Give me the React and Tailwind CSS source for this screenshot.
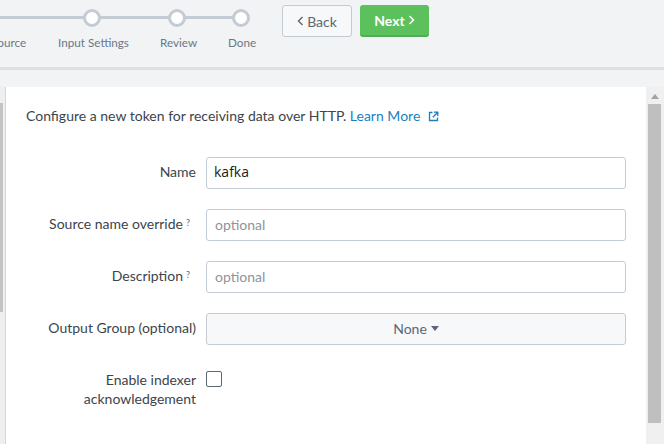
import React from "react";

const font = { fontFamily: "Lato, 'Open Sans', sans-serif" };

function Row({ label, q, children }) {
  return (
    <div className="flex items-center h-[32px]">
      <div className={`w-[190px] text-right text-[14px] text-[#3c444d] leading-[20px] -mt-[2px] ${q ? "pr-[6px]" : ""}`}>
        {label}
        {q && <sup className="text-[9px] text-[#5c6773] ml-[3px] relative -top-[3px]">?</sup>}
      </div>
      <div className="ml-[10px] w-[420px]">{children}</div>
    </div>
  );
}

export default function App() {
  return (
    <div className="w-[664px] h-[444px] overflow-hidden bg-[#f2f3f5] flex flex-col" style={font}>
      {/* top bar */}
      <div className="h-[67px] shrink-0 relative">
        <div className="absolute left-0 top-[16px] w-[242px] h-[3px] bg-[#c3cbd4]" />
        {[92, 177, 241].map((x) => (
          <div
            key={x}
            className="absolute top-[9px] w-[18px] h-[18px] rounded-full bg-white border-[3px] border-[#c3cbd4]"
            style={{ left: x - 9 }}
          />
        ))}
        <div className="absolute top-[34px] left-0 w-[270px] h-[16px] text-[11.7px] text-[#6b7785]">
          <span className="absolute left-[-9px]">Source</span>
          <span className="absolute left-[58px]">Input Settings</span>
          <span className="absolute left-[160px]">Review</span>
          <span className="absolute left-[228px]">Done</span>
        </div>
        <div className="absolute top-[5px] left-[282px] flex gap-[8px]">
          <button className="w-[70px] h-[32px] rounded-[3px] border border-[#c3cbd4] bg-[#f7f8fa] text-[#5c6773] text-[14px] flex items-center justify-center gap-[3px]">
            <svg width="7" height="10" viewBox="0 0 7 10"><path d="M5.5 1 L1.5 5 L5.5 9" fill="none" stroke="#5c6773" strokeWidth="1.4" /></svg>
            Back
          </button>
          <button className="w-[69px] h-[32px] rounded-[3px] bg-[#5cc05c] border-b-2 border-[#53ac53] text-white font-bold text-[14px] flex items-center justify-center gap-[3px]">
            Next
            <svg width="7" height="10" viewBox="0 0 7 10"><path d="M1.5 1 L5.5 5 L1.5 9" fill="none" stroke="#fff" strokeWidth="1.6" /></svg>
          </button>
        </div>
      </div>
      <div className="h-[3px] shrink-0 bg-[#dcdfe3]" />
      <div className="h-[17px] shrink-0" />
      {/* content */}
      <div className="flex flex-1 min-h-0">
        <div className="bg-[#efefef] relative border-r border-[#d6d6d6] shrink-0 w-[6px]">
          <div className="absolute left-0 top-[16px] w-[3px] h-[209px] bg-[#c4c4c4]" />
        </div>
        <div className="flex-1 bg-white pt-[20px] pl-[20px]">
          <div className="text-[14px] text-[#3c444d] leading-[18px] flex items-center">
            Configure a new token for receiving data over HTTP.&nbsp;
            <span className="text-[#1a80c0]">Learn More</span>
            <svg className="ml-[8px]" width="11" height="11" viewBox="0 0 11 11">
              <path d="M4.5 1.5 H1.5 V9.5 H9.5 V6.5" fill="none" stroke="#1a80c0" strokeWidth="1.3" />
              <path d="M6 1.2 H9.8 V5 M9.8 1.2 L4.8 6.2" fill="none" stroke="#1a80c0" strokeWidth="1.3" />
            </svg>
          </div>
          <div className="mt-[32px] ml-[-20px] flex flex-col gap-[20px]">
            <Row label="Name">
              <div className="h-[32px] border border-[#c3cbd4] rounded-[3px] px-[7px] flex items-center text-[14px] text-[#1a1c20] -mt-[1px]" style={{ fontFamily: "'Open Sans', sans-serif" }}>
                <span className="-mt-[3px]">kafka</span>
              </div>
            </Row>
            <Row label="Source name override" q>
              <div className="h-[32px] border border-[#c3cbd4] rounded-[3px] px-[8px] flex items-center text-[14px] text-[#8b95a0] -mt-[1px]">
                optional
              </div>
            </Row>
            <Row label="Description" q>
              <div className="h-[32px] border border-[#c3cbd4] rounded-[3px] px-[8px] flex items-center text-[14px] text-[#8b95a0] -mt-[1px]">
                optional
              </div>
            </Row>
            <Row label="Output Group (optional)">
              <div className="h-[32px] border border-[#c3cbd4] rounded-[3px] bg-[#f7f8fa] flex items-center justify-center text-[14px] text-[#5c6773] gap-[4px] -mt-[1px]">
                None
                <svg width="8" height="5" viewBox="0 0 8 5"><path d="M0 0 H8 L4 5 Z" fill="#5c6773" /></svg>
              </div>
            </Row>
            <div className="flex items-start mt-[5px]">
              <div className="w-[190px] text-right text-[14px] text-[#3c444d] leading-[19px]">
                Enable indexer<br />acknowledgement
              </div>
              <div className="ml-[10px] w-[16px] h-[16px] border border-[#5c6773] rounded-[2px] bg-white mt-[1px]" />
            </div>
          </div>
        </div>
        <div className="w-[18px] shrink-0 bg-[#f0f0f0] relative">
          <svg className="absolute left-[5px] top-[7px]" width="8" height="5" viewBox="0 0 8 5"><path d="M0 5 H8 L4 0 Z" fill="#a3a3a3" /></svg>
          <div className="absolute left-[2px] top-[17px] w-[13px] h-[319px] bg-[#bfbfbf]" />
        </div>
      </div>
    </div>
  );
}
